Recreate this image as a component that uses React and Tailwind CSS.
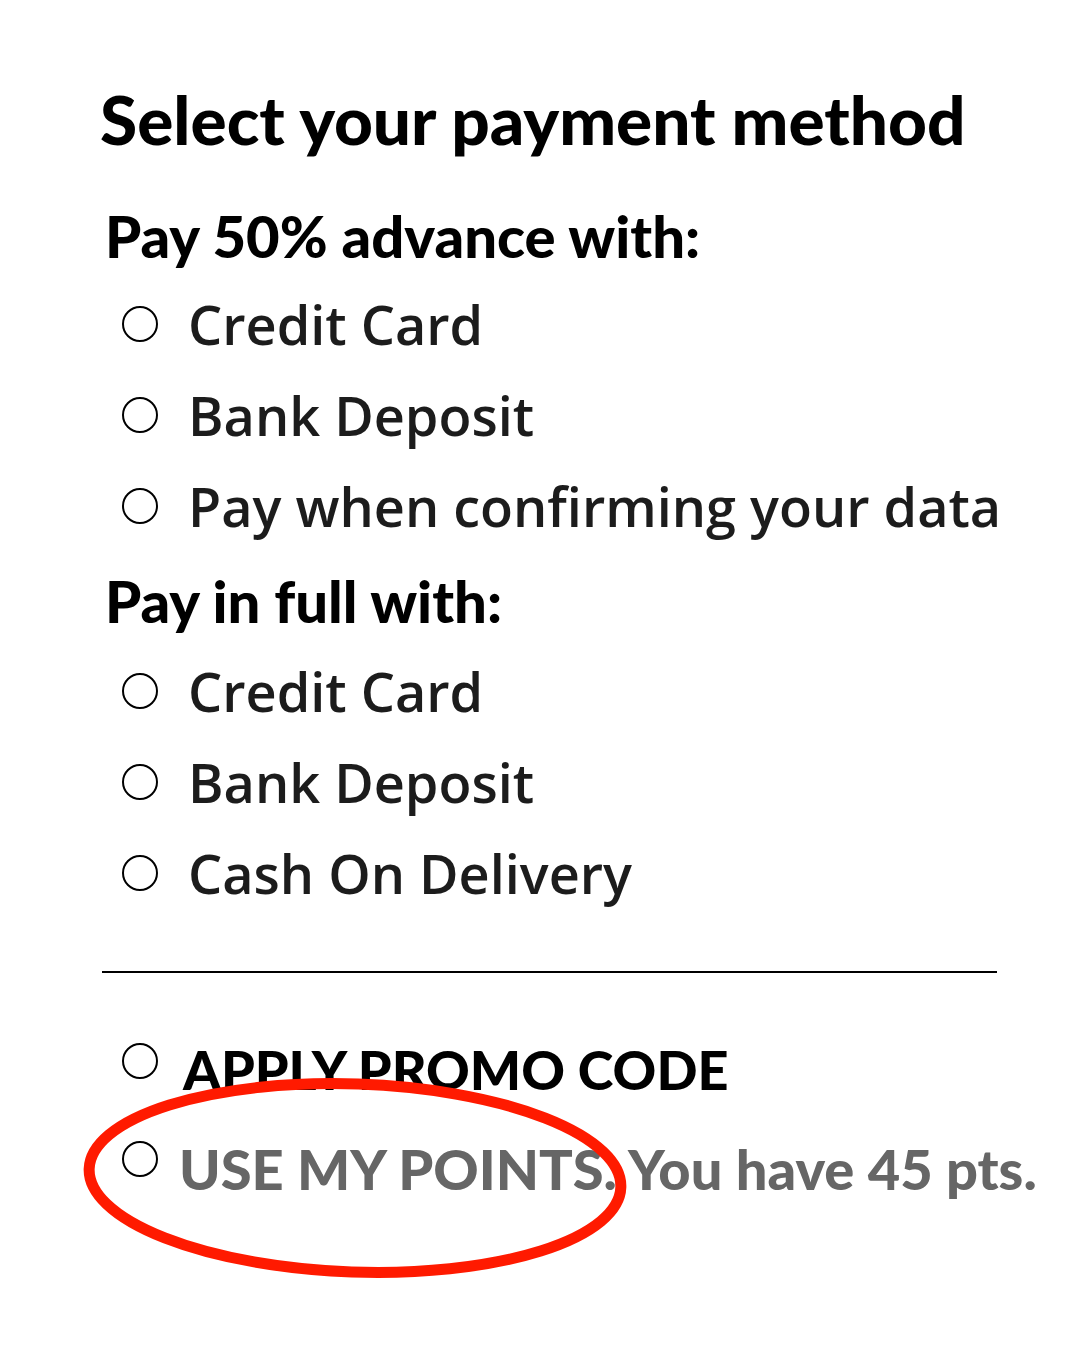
const advance = ['Credit Card', 'Bank Deposit', 'Pay when confirming your data']
const full = ['Credit Card', 'Bank Deposit', 'Cash On Delivery']

function Radio() {
  return <span className="block w-9 h-9 shrink-0 rounded-full border-2 border-black bg-white" />
}

function Option({ label }) {
  return (
    <label className="flex items-center gap-[30px] h-[91px] pl-[22px]">
      <Radio />
      <span className="text-[54px] leading-none font-semibold text-[#1c1c1c] whitespace-nowrap font-['Open_Sans',sans-serif]">{label}</span>
    </label>
  )
}

export default function App() {
  return (
    <div className="relative w-[1085px] h-[1365px] bg-white font-['Lato',sans-serif] overflow-hidden">
      <div className="pt-[85px] pl-[100px] pr-[88px]">
        <h1 className="text-[67.5px] leading-none font-black text-black whitespace-nowrap">Select your payment method</h1>

        <h2 className="mt-[54px] text-[58px] leading-none font-black text-black pl-[5px]">Pay 50% advance with:</h2>
        <div className="mt-[14px]">
          {advance.map(a => <Option key={a} label={a} />)}
        </div>

        <h2 className="mt-[20px] text-[58px] leading-none font-black text-black pl-[5px]">Pay in full with:</h2>
        <div className="mt-[16px]">
          {full.map(a => <Option key={a} label={a} />)}
        </div>

        <hr className="mt-[52px] ml-[2px] border-0 border-t-2 border-black" />

        <div className="mt-[70px] pl-[22px] flex flex-col gap-[44px]">
          <label className="flex items-start gap-[25px]">
            <Radio />
            <span className="text-[54px] leading-none font-black text-black uppercase">Apply promo code</span>
          </label>
          <label className="flex items-start gap-[21px]">
            <Radio />
            <span className="text-[56px] leading-none font-black text-[#666] whitespace-nowrap">USE MY POINTS. You have 45 pts.</span>
          </label>
        </div>
      </div>

      {/* red marker ring around the points option */}
      <svg className="absolute left-0 top-0 pointer-events-none" width="1085" height="1365">
        <ellipse cx="355" cy="1178" rx="266" ry="94" fill="none" stroke="#ff1a00" strokeWidth="11" transform="rotate(2 355 1178)" />
      </svg>
    </div>
  )
}
